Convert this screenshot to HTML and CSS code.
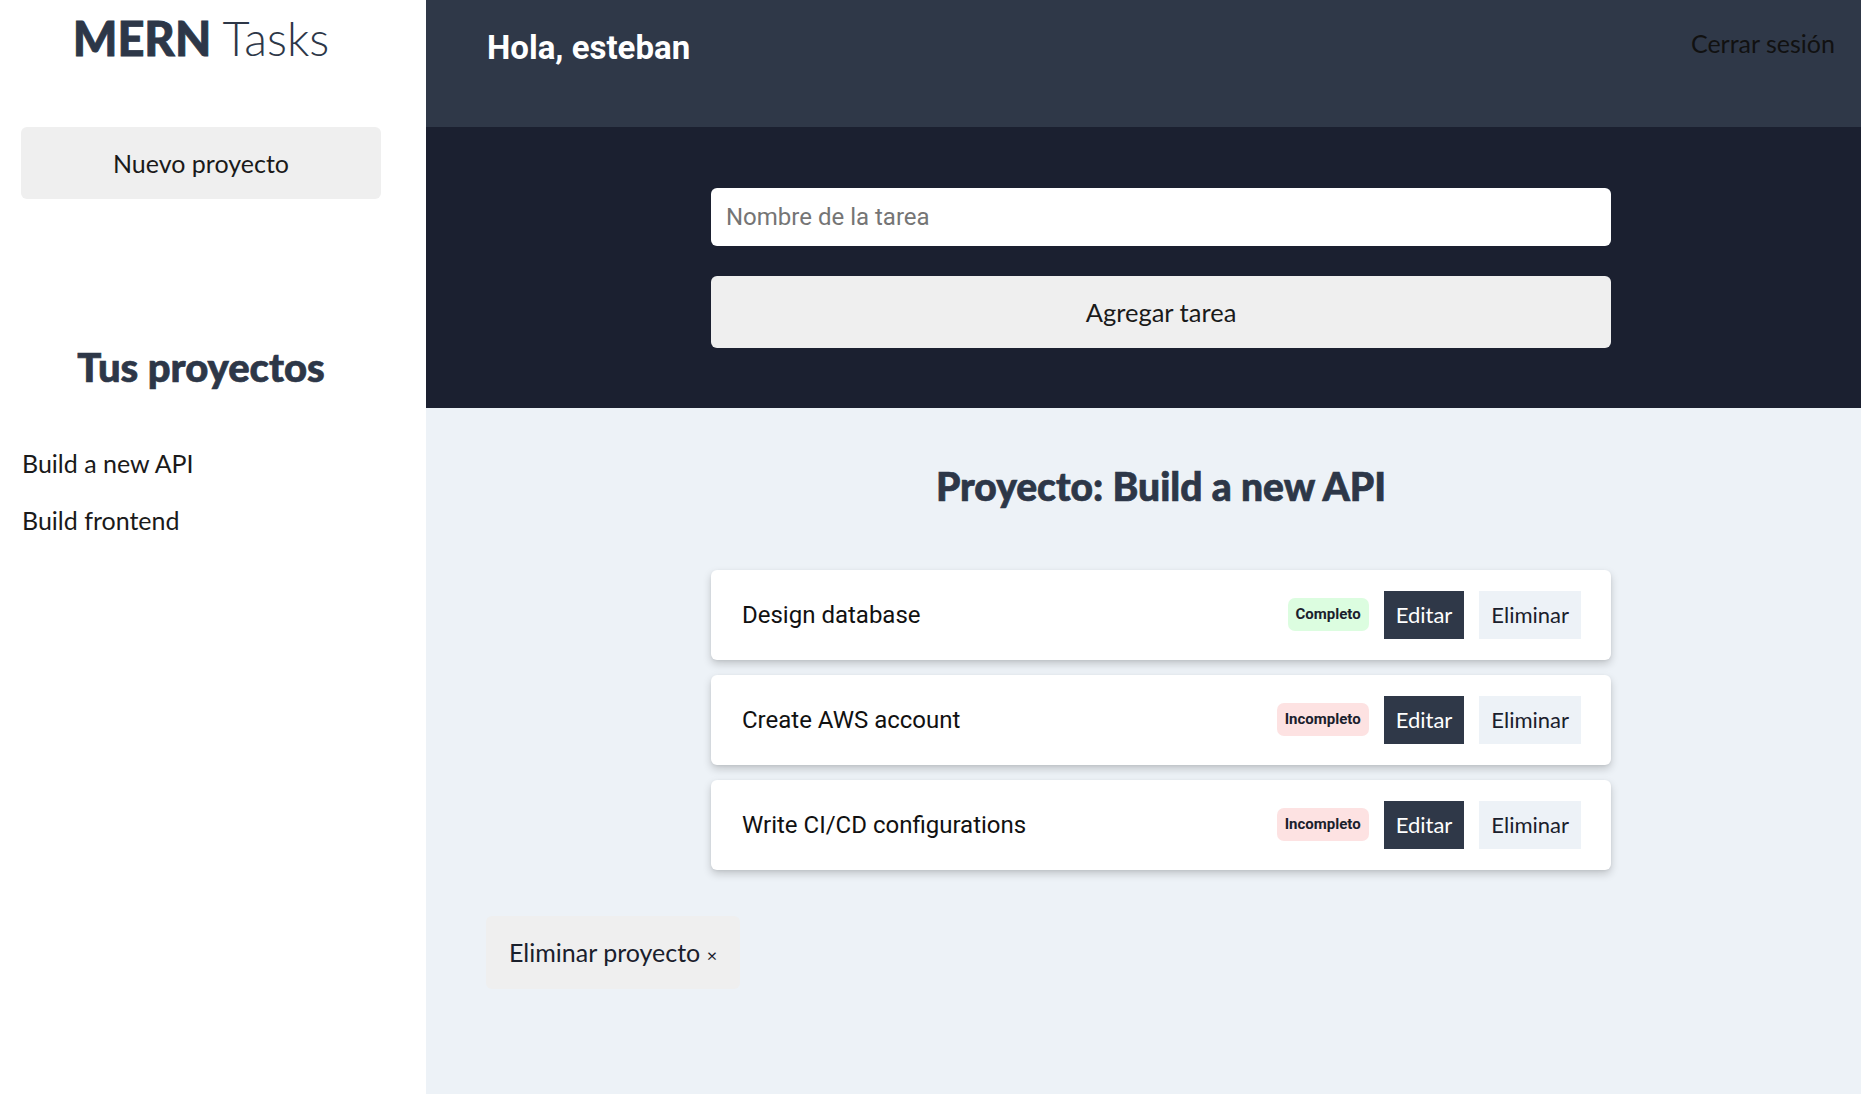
FILE: index.html
```html
<!DOCTYPE html>
<html lang="es">
<head>
<meta charset="utf-8">
<title>MERN Tasks</title>
<link rel="stylesheet" href="styles.css">
</head>
<body>
<div class="app">
  <aside class="sidebar">
    <h1 class="logo"><span class="logo-bold">MERN</span> <span class="logo-light">Tasks</span></h1>
    <button class="btn-new">Nuevo proyecto</button>
    <h2 class="side-title">Tus proyectos</h2>
    <ul class="project-list">
      <li>Build a new API</li>
      <li>Build frontend</li>
    </ul>
  </aside>
  <main class="main">
    <header class="topbar">
      <p class="greeting">Hola, <span>esteban</span></p>
      <a class="logout">Cerrar sesión</a>
    </header>
    <section class="form-area">
      <form class="task-form">
        <input class="task-input" type="text" placeholder="Nombre de la tarea">
        <button class="btn-add" type="button">Agregar tarea</button>
      </form>
    </section>
    <section class="project">
      <div class="tasks-wrap">
        <div class="column">
          <h2 class="project-title">Proyecto: Build a new API</h2>
          <ul class="tasks">
            <li class="task">
              <span class="task-name">Design database</span>
              <div class="actions">
                <span class="badge badge-done">Completo</span>
                <button class="btn-edit">Editar</button>
                <button class="btn-del">Eliminar</button>
              </div>
            </li>
            <li class="task">
              <span class="task-name">Create AWS account</span>
              <div class="actions">
                <span class="badge badge-todo">Incompleto</span>
                <button class="btn-edit">Editar</button>
                <button class="btn-del">Eliminar</button>
              </div>
            </li>
            <li class="task">
              <span class="task-name">Write CI/CD configurations</span>
              <div class="actions">
                <span class="badge badge-todo">Incompleto</span>
                <button class="btn-edit">Editar</button>
                <button class="btn-del">Eliminar</button>
              </div>
            </li>
          </ul>
        </div>
      </div>
      <button class="btn-delete-project">Eliminar proyecto <span class="x">×</span></button>
    </section>
  </main>
</div>
</body>
</html>
```
FILE: styles.css
```css
* { box-sizing: border-box; }
html, body { margin: 0; padding: 0; height: 100%; }
body {
  font-family: Lato, "Open Sans", sans-serif;
  color: #2d3748;
  background: #edf2f7;
}
.app {
  display: flex;
  min-height: 1094px;
}
.sidebar {
  width: 426px;
  flex: 0 0 426px;
  background: #ffffff;
  padding: 10px 45px 0 21px;
}
.logo {
  margin: 0;
  font-size: 47px;
  line-height: 1.2;
  text-align: center;
  color: #2d3748;
  font-weight: 300;
}
.logo-bold { font-weight: 900; -webkit-text-stroke: 0.8px #2d3748; }
.logo-light { font-weight: 300; }
.btn-new {
  display: block;
  width: 360px;
  height: 72px;
  margin-top: 61px;
  border: none;
  border-radius: 6px;
  background: #efefef;
  font-family: Lato, sans-serif;
  font-size: 25px;
  color: #1a1a1a;
}
.side-title {
  margin: 144px 0 0;
  font-size: 40px;
  line-height: 1.2;
  font-weight: 900;
  text-align: center;
  color: #2d3748;
  -webkit-text-stroke: 0.7px #2d3748;
}
.project-list {
  list-style: none;
  margin: 57px 0 0;
  padding: 0 0 0 1px;
  display: flex;
  flex-direction: column;
  gap: 27px;
}
.project-list li {
  font-size: 25px;
  line-height: 1.2;
  color: #1a1a1a;
}
.main {
  flex: 1;
  background: #edf2f7;
}
.topbar {
  height: 127px;
  background: #2f3848;
  display: flex;
  justify-content: space-between;
  align-items: flex-start;
  padding: 28px 26px 0 61px;
}
.greeting {
  margin: 0;
  font-family: Roboto, sans-serif;
  font-weight: 700;
  font-size: 33px;
  color: #ffffff;
}
.logout {
  font-size: 25px;
  line-height: 1.2;
  font-weight: 400;
  color: #111111;
}
.form-area {
  background: #1b2030;
  padding: 61px 0 60px 35px;
}
.task-form {
  max-width: 900px;
  margin: 0 auto;
  display: flex;
  flex-direction: column;
  gap: 30px;
}
.task-input {
  height: 58px;
  border: none;
  border-radius: 6px;
  background: #fff;
  padding: 0 15px;
  font-family: Roboto, sans-serif;
  font-size: 24px;
  color: #222;
}
.task-input::placeholder { color: #757575; }
.btn-add {
  height: 72px;
  border: none;
  border-radius: 6px;
  background: #efefef;
  font-family: Lato, sans-serif;
  font-size: 25.5px;
  color: #1a1a1a;
}
.project {
  padding: 55px 0 0;
}
.tasks-wrap {
  padding-left: 35px;
}
.column {
  max-width: 900px;
  margin: 0 auto;
}
.project-title {
  margin: 0 0 60px;
  font-size: 39px;
  line-height: 1.2;
  font-weight: 900;
  text-align: center;
  color: #2d3748;
  -webkit-text-stroke: 0.7px #2d3748;
}
.tasks {
  list-style: none;
  margin: 0;
  padding: 0;
  display: flex;
  flex-direction: column;
  gap: 15px;
}
.task {
  height: 90px;
  background: #fff;
  border-radius: 6px;
  box-shadow: 0 4px 8px rgba(0, 0, 0, 0.18), 0 1px 3px rgba(0, 0, 0, 0.06);
  display: flex;
  align-items: center;
  justify-content: space-between;
  padding: 0 30px 0 31px;
}
.task-name {
  font-family: Roboto, sans-serif;
  font-size: 24px;
  color: #111;
}
.actions {
  display: flex;
  align-items: center;
  gap: 15px;
}
.badge {
  font-family: Roboto, sans-serif;
  font-weight: 700;
  font-size: 15px;
  line-height: 19px;
  padding: 7px 8px;
  border-radius: 7px;
  color: #1a202c;
}
.badge-done { background: #dcfde0; }
.badge-todo { background: #fde2e2; }
.btn-edit, .btn-del {
  height: 48px;
  border: none;
  border-radius: 0;
  padding: 0 12px;
  font-family: Lato, sans-serif;
  font-size: 22px;
}
.btn-edit { background: #2f3848; color: #fff; }
.btn-del { background: #edf2f7; color: #1a202c; }
.btn-delete-project {
  display: block;
  margin: 46px 0 0 60px;
  height: 73px;
  padding: 0 23px;
  border: none;
  border-radius: 6px;
  background: #efefef;
  font-family: Lato, sans-serif;
  font-size: 25px;
  color: #1a202c;
}
.btn-delete-project .x { font-size: 18px; }
```
